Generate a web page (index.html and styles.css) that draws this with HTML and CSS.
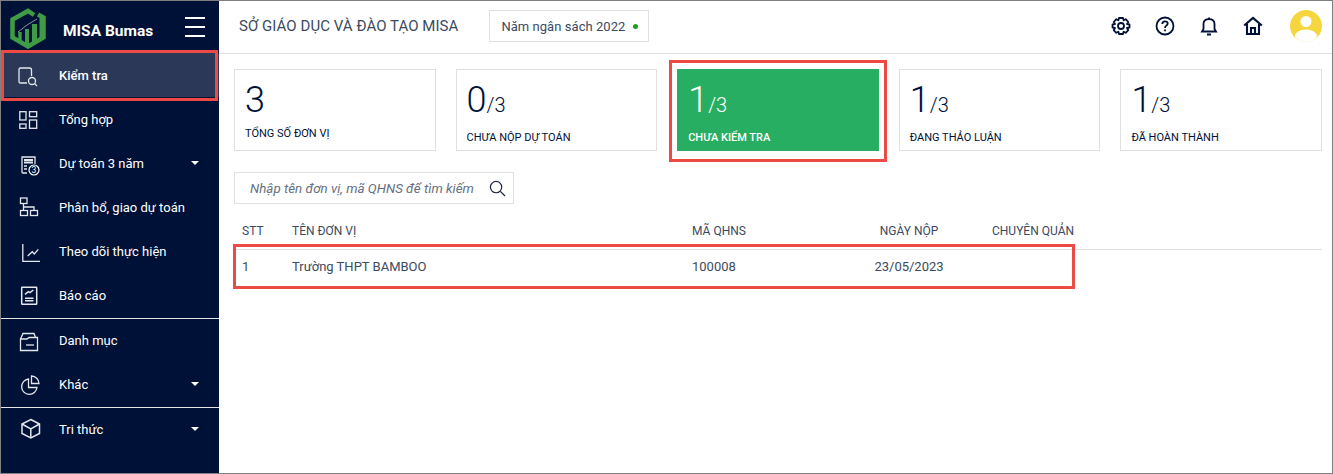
FILE: index.html
```html
<!DOCTYPE html>
<html lang="vi">
<head>
<meta charset="utf-8">
<title>MISA Bumas</title>
<link rel="stylesheet" href="styles.css">
</head>
<body>
<div class="app">
  <aside class="sidebar">
    <div class="brand">
      <svg class="logo" viewBox="0 0 36 41" width="36" height="41"><path d="M24 7L18 3L2.500 11.500V29.500L18 38.500L33.500 29.500V9.500L28 6.500" fill="none" stroke="#3f9c46" stroke-width="4.500"/><path d="M31 10V30" stroke="#3f9c46" stroke-width="3"/><rect x="8.300" y="24" width="3.400" height="10" fill="#3f9c46"/><rect x="15" y="21" width="4" height="15" fill="#3f9c46"/><rect x="22" y="16" width="5" height="18" fill="#3f9c46"/><path d="M8 24L17 17L27 11" stroke="#b9cdb9" stroke-width=".7" fill="none"/></svg>
      <span class="brand-name">MISA Bumas</span>
      <span class="burger"><i></i><i></i><i></i></span>
    </div>
    <nav class="nav">
      <a class="nav-item active"><svg class="ico" viewBox="0 0 20 20"><path d="M9 18H2.500Q1 18 1 16.500V4.500Q1 3 2.500 3H11.500Q13.500 3 13.500 5V11"/><circle cx="14" cy="16" r="3.500"/><path d="M16.500 18.500L19 21"/></svg><span>Kiểm tra</span></a>
      <a class="nav-item"><svg class="ico" viewBox="0 0 20 20"><rect x="1.800" y="2.700" width="6.200" height="8.300"/><rect x="11.500" y="2.700" width="7.200" height="5"/><rect x="1.800" y="15" width="6.200" height="4.300"/><rect x="11.500" y="11" width="7.200" height="8.300"/></svg><span>Tổng hợp</span></a>
      <a class="nav-item"><svg class="ico" viewBox="0 0 20 20"><path d="M9 20H5Q4 20 4 19V4H17V11"/><path d="M6 7H15M6 9.500H15" stroke-width="1.800"/><path d="M6 13H9M6 16H9"/><circle cx="16" cy="17" r="5" class="ico-disc"/><text x="16" y="20" class="ico-num">3</text></svg><span>Dự toán 3 năm</span><b class="caret"></b></a>
      <a class="nav-item"><svg class="ico" viewBox="0 0 20 20"><rect x="2.500" y="1" width="6.500" height="5.500"/><rect x="2.500" y="13.500" width="7" height="5"/><rect x="12.500" y="13.500" width="7" height="5"/><path d="M5.500 6.500V13.500M5.500 10H16V13.500"/></svg><span>Phân bổ, giao dự toán</span></a>
      <a class="nav-item"><svg class="ico" viewBox="0 0 20 20"><path d="M4.800 3V20.300H22"/><path d="M9.700 15L14.300 10.700L16.300 13L20.300 8.300"/></svg><span>Theo dõi thực hiện</span></a>
      <a class="nav-item"><svg class="ico ico-bold" viewBox="0 0 20 20"><rect x="3.700" y="2.300" width="15" height="17" rx=".5"/><path d="M7 9.300L10.300 6.700L12 7.700L15.300 5M7 13.300H15.500M7 15.700H15.500"/></svg><span>Báo cáo</span></a>
    </nav>
    <nav class="nav nav-divided">
      <a class="nav-item"><svg class="ico" viewBox="0 0 20 20"><path d="M2.500 9L5 3.500H16L17.500 7.500"/><path d="M2.500 9H9L11 7.500H19.500V20.500H2.500Z"/><path d="M8 15H16"/></svg><span>Danh mục</span></a>
      <a class="nav-item"><svg class="ico" viewBox="0 0 20 20"><path d="M10.500 5A7.700 7.700 0 1 0 19 13.500H10.500Z"/><path d="M13.500 2A7.700 7.700 0 0 1 21 9.500H13.500Z"/></svg><span>Khác</span><b class="caret"></b></a>
    </nav>
    <nav class="nav nav-divided">
      <a class="nav-item"><svg class="ico ico-bold" viewBox="0 0 20 20"><path d="M12.800 .5L21.500 5V14.500L12.800 19L4 14.500V5Z"/><path d="M4 5L12.800 10L21.500 5M12.800 10V19"/></svg><span>Tri thức</span><b class="caret"></b></a>
    </nav>
  </aside>
  <div class="content">
    <header class="topbar">
      <h1 class="org">SỞ GIÁO DỤC VÀ ĐÀO TẠO MISA</h1>
      <div class="year"><span>Năm ngân sách 2022</span><i class="dot"></i></div>
      <div class="tools">
        <svg class="tool" viewBox="0 0 20 20"><path d="M8 2H12L12.600 4.300L14.700 3.200L17.300 6L16 8L18.500 8.500V11.500L16 12L17.300 14.200L14.700 16.800L12.600 15.700L12 18H8L7.400 15.700L5.300 16.800L2.700 14.200L4 12L1.500 11.500V8.500L4 8L2.700 6L5.300 3.200L7.400 4.300Z" stroke-linejoin="round"/><circle cx="10" cy="10" r="3"/></svg>
        <svg class="tool" viewBox="0 0 20 20"><circle cx="10" cy="10" r="8.500"/><path d="M7.300 8Q7.300 5.300 10 5.300Q12.700 5.300 12.700 7.600Q12.700 9 11 9.900Q10 10.500 10 12"/><path d="M10 13.500V15.300"/></svg>
        <svg class="tool" viewBox="0 0 20 20"><path d="M3 15.500H17L15.500 13V8Q15.500 3.200 10 3.200Q4.500 3.200 4.500 8V13Z"/><path d="M10 1.500V3.200M8 18.500H12"/></svg>
        <svg class="tool tool-bold" viewBox="0 0 20 20"><path d="M1.200 9.500L10 2L18.800 9.500M4 8V18H16V8M8 18V12H12V18"/></svg>
        <svg class="avatar" viewBox="0 0 32 32"><defs><clipPath id="av"><circle cx="16" cy="16" r="16"/></clipPath></defs><circle cx="16" cy="16" r="16" fill="#f6d63f"/><g clip-path="url(#av)" fill="#fff"><circle cx="16" cy="11.500" r="5.500"/><ellipse cx="16" cy="26" rx="11" ry="6.500"/></g></svg>
      </div>
    </header>
    <main class="main">
      <section class="cards">
        <article class="card card-total"><div class="num">3</div><div class="label">TỔNG SỐ ĐƠN VỊ</div></article>
        <article class="card"><div class="num">0<small>/3</small></div><div class="label">CHƯA NỘP DỰ TOÁN</div></article>
        <article class="card card-active"><div class="num">1<small>/3</small></div><div class="label">CHƯA KIỂM TRA</div></article>
        <article class="card"><div class="num">1<small>/3</small></div><div class="label">ĐANG THẢO LUẬN</div></article>
        <article class="card"><div class="num">1<small>/3</small></div><div class="label">ĐÃ HOÀN THÀNH</div></article>
      </section>
      <div class="search"><span>Nhập tên đơn vị, mã QHNS để tìm kiếm</span><svg class="search-ico" viewBox="0 0 18 18"><circle cx="7.500" cy="7.500" r="6"/><path d="M12 12L17 17"/></svg></div>
      <section class="table">
        <div class="row head"><span>STT</span><span>TÊN ĐƠN VỊ</span><span>MÃ QHNS</span><span class="center">NGÀY NỘP</span><span class="chuyen">CHUYÊN QUẢN</span></div>
        <div class="row body"><span>1</span><span>Trường THPT BAMBOO</span><span>100008</span><span class="center">23/05/2023</span><span></span></div>
      </section>
    </main>
  </div>
</div>
<div class="mark mark-nav"></div>
<div class="mark mark-card"></div>
<div class="mark mark-row"></div>
</body>
</html>
```
FILE: styles.css
```css
*{box-sizing:border-box}
html,body{margin:0;padding:0;height:100%;overflow:hidden}
body{font-family:Roboto,"Liberation Sans",sans-serif;background:#fff;color:#001137;position:relative}
.app{display:flex;height:474px;border:1px solid #808080}
.sidebar{width:218px;flex:none;background:#001137;color:#fff}
.brand{height:52px;display:flex;align-items:center;padding-left:9px}
.logo{flex:none;margin-top:2px}
.brand-name{font-size:15.500px;font-weight:700;margin-left:17px;margin-top:7px;white-space:nowrap}
.burger{margin-left:auto;margin-right:14px;display:flex;flex-direction:column;gap:7px;width:20px;margin-top:-1px}
.burger i{display:block;height:2px;background:#fff}
.nav-item{display:flex;align-items:center;height:44px;padding-left:17px;font-size:13px;color:#fff;position:relative}
.nav-item span{margin-left:21px;white-space:nowrap}
.nav-item.active{background:#2b3857;font-weight:500}
.nav-divided{border-top:1px solid #e6e6e6;margin-top:1px}
.nav-divided .nav-item:first-child{margin-top:-1px}
.ico{width:20px;height:20px;fill:none;stroke:#e4e7ec;stroke-width:1.300;flex:none;overflow:visible}
.ico-bold{stroke-width:1.500}
.ico-disc{fill:#001137;stroke:#fff;stroke-width:1.200}
.ico-num{font-family:Roboto,sans-serif;font-size:8.500px;text-anchor:middle;fill:#fff;stroke:none}
.caret{position:absolute;left:190px;top:20px;width:0;height:0;border-left:4.500px solid transparent;border-right:4.500px solid transparent;border-top:4px solid #fff}
.content{flex:1;min-width:0;display:flex;flex-direction:column}
.topbar{height:53px;flex:none;border-bottom:1px solid #e0e0e0;display:flex;align-items:center;padding-left:20px;padding-bottom:2px}
.org{margin:0;font-size:15px;font-weight:400;letter-spacing:.05px;color:#3c4a5e;white-space:nowrap}
.year{margin-left:31px;height:32px;width:160px;border:1px solid #e0e0e0;display:flex;align-items:center;padding-left:11px;font-size:13px;letter-spacing:.05px;color:#3c4a5e;white-space:nowrap}
.dot{width:5px;height:5px;border-radius:50%;background:#1aa31a;margin-left:8px}
.tools{margin-left:auto;display:flex;align-items:center;padding-right:10px}
.tool{width:20px;height:20px;fill:none;stroke:#001137;stroke-width:1.800;margin-right:24px;flex:none}
.tool-bold{stroke-width:2.100}
.avatar{width:32px;height:32px;flex:none;margin-left:3px}
.main{padding:15px 10px 0 15px}
.cards{display:grid;grid-template-columns:repeat(5,1fr);gap:20px}
.card{height:82px;border:1px solid #e0e0e0;padding:0 10px;display:flex;flex-direction:column}
.num{font-size:36px;font-weight:300;line-height:42px;margin-top:9px;height:42px;white-space:nowrap}
.num small{font-size:20px;font-weight:300}
.label{font-size:11px;line-height:14px;margin-top:10px;white-space:nowrap}
.card-total .label{margin-top:6px}
.card-active{background:#28ae62;border-color:#28ae62;color:#fff}
.card-active .label{font-weight:500}
.search{margin-top:21px;width:280px;height:32px;border:1px solid #e0e0e0;display:flex;align-items:center;padding-left:15px;font-size:13.330px;font-style:italic;color:#65707f;white-space:nowrap}
.search-ico{width:17px;height:17px;margin-left:15px;fill:none;stroke:#1a2540;stroke-width:1.300;flex:none}
.table{margin-top:9px}
.row{display:grid;grid-template-columns:50px 400px 152px 130px auto;padding-left:8px;align-items:center;font-size:13px;color:#3c4a5e;white-space:nowrap}
.head{height:37px;border-bottom:1px solid #e0e0e0;font-size:12px}
.body{height:32px}
.center{text-align:center}
.chuyen{margin-left:18px}
.mark{position:absolute;border:3px solid #ec4a44;pointer-events:none}
.mark-nav{left:1px;top:50px;width:217px;height:51px}
.mark-card{left:669px;top:60px;width:218px;height:102px}
.mark-row{left:233px;top:244px;width:842px;height:45px}
```
